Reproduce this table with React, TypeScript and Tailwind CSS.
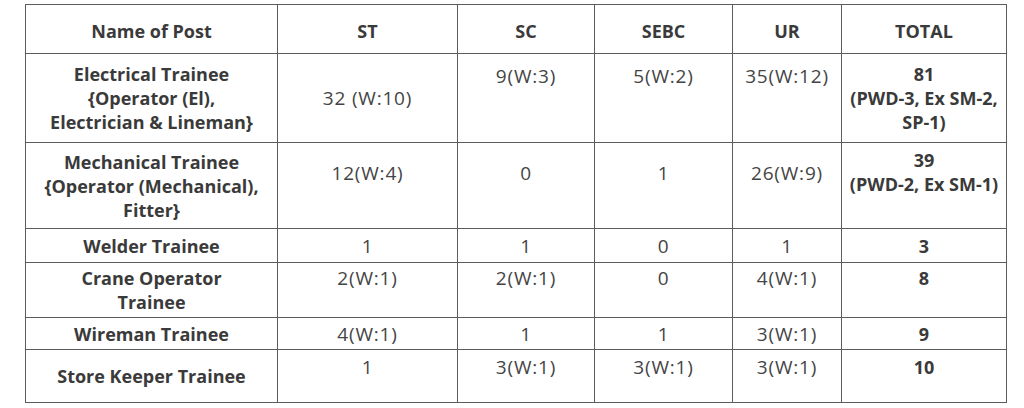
type Cell = { text: string[]; bold?: boolean; pt?: string };

const headers = ["Name of Post", "ST", "SC", "SEBC", "UR", "TOTAL"];

// pt: class for top-aligned cells; undefined => vertically centred
const rows: { h: string; cells: Cell[] }[] = [
  {
    h: "h-[89px]",
    cells: [
      { text: ["Electrical Trainee", "{Operator (El),", "Electrician & Lineman}"], bold: true },
      { text: ["32 (W:10)"] },
      { text: ["9(W:3)"], pt: "align-top pt-[10px]" },
      { text: ["5(W:2)"], pt: "align-top pt-[10px]" },
      { text: ["35(W:12)"], pt: "align-top pt-[10px]" },
      { text: ["81", "(PWD-3, Ex SM-2,", "SP-1)"], bold: true },
    ],
  },
  {
    h: "h-[86px]",
    cells: [
      { text: ["Mechanical Trainee", "{Operator (Mechanical),", "Fitter}"], bold: true },
      { text: ["12(W:4)"], pt: "align-top pt-[18px]" },
      { text: ["0"], pt: "align-top pt-[18px]" },
      { text: ["1"], pt: "align-top pt-[18px]" },
      { text: ["26(W:9)"], pt: "align-top pt-[18px]" },
      { text: ["39", "(PWD-2, Ex SM-1)"], bold: true, pt: "align-top pt-[5px]" },
    ],
  },
  {
    h: "h-[34px]",
    cells: [
      { text: ["Welder Trainee"], bold: true },
      { text: ["1"] },
      { text: ["1"] },
      { text: ["0"] },
      { text: ["1"] },
      { text: ["3"], bold: true },
    ],
  },
  {
    h: "h-[55px]",
    cells: [
      { text: ["Crane Operator", "Trainee"], bold: true },
      { text: ["2(W:1)"], pt: "align-top pt-[3px]" },
      { text: ["2(W:1)"], pt: "align-top pt-[3px]" },
      { text: ["0"], pt: "align-top pt-[3px]" },
      { text: ["4(W:1)"], pt: "align-top pt-[3px]" },
      { text: ["8"], bold: true, pt: "align-top pt-[3px]" },
    ],
  },
  {
    h: "h-[32px]",
    cells: [
      { text: ["Wireman Trainee"], bold: true },
      { text: ["4(W:1)"] },
      { text: ["1"] },
      { text: ["1"] },
      { text: ["3(W:1)"] },
      { text: ["9"], bold: true },
    ],
  },
  {
    h: "h-[53px]",
    cells: [
      { text: ["Store Keeper Trainee"], bold: true },
      { text: ["1"], pt: "align-top pt-[5px]" },
      { text: ["3(W:1)"], pt: "align-top pt-[5px]" },
      { text: ["3(W:1)"], pt: "align-top pt-[5px]" },
      { text: ["3(W:1)"], pt: "align-top pt-[5px]" },
      { text: ["10"], bold: true, pt: "align-top pt-[5px]" },
    ],
  },
];

export default function App() {
  return (
    <div className="h-[408px] w-[1024px] bg-white pt-[4px] pl-[25px] font-['Open_Sans','Liberation_Sans',sans-serif] text-[18px] leading-[24px] text-[#3a3a3a]">
      <table className="w-[981px] table-fixed border-collapse border-[1.5px] border-[#5c5c5c]">
        <colgroup>
          <col className="w-[252px]" />
          <col className="w-[180px]" />
          <col className="w-[137px]" />
          <col className="w-[138px]" />
          <col className="w-[109px]" />
          <col className="w-[165px]" />
        </colgroup>
        <thead>
          <tr className="h-[49px]">
            {headers.map((h) => (
              <th
                key={h}
                className="border-[1.5px] border-[#5c5c5c] p-0 pt-[3px] text-center align-middle font-bold"
              >
                {h}
              </th>
            ))}
          </tr>
        </thead>
        <tbody>
          {rows.map((r, i) => (
            <tr key={i} className={r.h}>
              {r.cells.map((c, j) => (
                <td
                  key={j}
                  className={`border-[1.5px] border-[#5c5c5c] p-0 text-center ${
                    c.pt ?? "align-middle"
                  } ${
                    c.bold
                      ? "font-bold"
                      : "text-[19px] font-normal tracking-[0.8px] text-[#444]"
                  }`}
                >
                  {c.text.map((t, k) => (
                    <div key={k} className="whitespace-nowrap">
                      {t}
                    </div>
                  ))}
                </td>
              ))}
            </tr>
          ))}
        </tbody>
      </table>
    </div>
  );
}
